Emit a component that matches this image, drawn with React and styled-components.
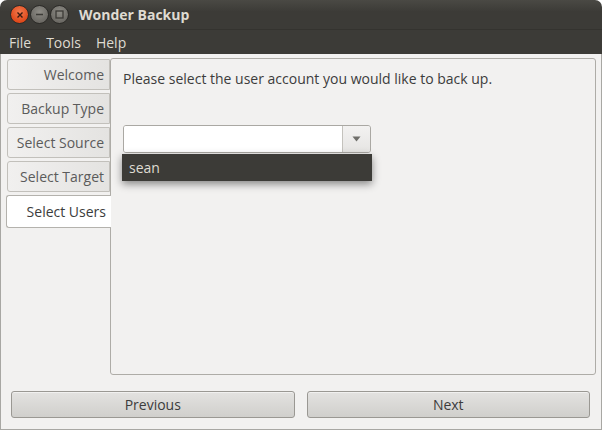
import React from 'react';
import styled, { createGlobalStyle } from 'styled-components';

const GlobalStyle = createGlobalStyle`
  html, body {
    margin: 0;
    padding: 0;
    background: #ffffff;
  }
  body {
    font-family: 'Open Sans', 'DejaVu Sans', sans-serif;
  }
`;

const tabs = ['Welcome', 'Backup Type', 'Select Source', 'Select Target', 'Select Users'];

const App = () => (
  <>
    <GlobalStyle />
    <Window>
      <TitleBar>
        <WinButtons>
          <WinButton close>
            <svg width="8" height="8" viewBox="0 0 8 8">
              <path d="M1.5 1.5 L6.5 6.5 M6.5 1.5 L1.5 6.5" stroke="#3a1a10" strokeWidth="1.4" />
            </svg>
          </WinButton>
          <WinButton>
            <svg width="9" height="9" viewBox="0 0 9 9">
              <path d="M1 4.5 H8" stroke="#3c3b37" strokeWidth="1.4" />
            </svg>
          </WinButton>
          <WinButton>
            <svg width="9" height="9" viewBox="0 0 9 9">
              <rect x="1" y="1" width="7" height="7" fill="none" stroke="#3c3b37" strokeWidth="1.3" />
            </svg>
          </WinButton>
        </WinButtons>
        <Title>Wonder Backup</Title>
      </TitleBar>
      <MenuBar>
        <MenuItem>File</MenuItem>
        <MenuItem>Tools</MenuItem>
        <MenuItem>Help</MenuItem>
      </MenuBar>
      <Body>
        <Notebook>
          <TabColumn>
            {tabs.map((t) => (
              <Tab key={t} active={t === 'Select Users'}>
                {t}
              </Tab>
            ))}
          </TabColumn>
          <Pane>
            <Prompt>Please select the user account you would like to back up.</Prompt>
            <ComboWrap>
              <Combo>
                <ComboEntry />
                <ComboArrow>
                  <svg width="9" height="6" viewBox="0 0 9 6">
                    <path d="M0.5 0.5 H8.5 L4.5 5.5 Z" fill="#6f6e6a" />
                  </svg>
                </ComboArrow>
              </Combo>
              <Popup>
                <PopupItem>sean</PopupItem>
              </Popup>
            </ComboWrap>
          </Pane>
        </Notebook>
        <ButtonRow>
          <Button>Previous</Button>
          <Button>Next</Button>
        </ButtonRow>
      </Body>
    </Window>
  </>
);

const Window = styled.div`
  width: 602px;
  height: 430px;
  display: flex;
  flex-direction: column;
  overflow: hidden;
  border-radius: 7px 7px 0 0;
`;

const TitleBar = styled.div`
  height: 29px;
  display: flex;
  align-items: center;
  background: linear-gradient(#4a4944, #3c3b37 40%);
  border-bottom: 1px solid #34332f;
  padding-left: 10px;
`;

const WinButtons = styled.div`
  display: flex;
  gap: 1px;
`;

const WinButton = styled.div`
  width: 17px;
  height: 17px;
  border-radius: 50%;
  display: flex;
  align-items: center;
  justify-content: center;
  background: ${(p) =>
    p.close
      ? 'radial-gradient(circle at 50% 35%, #f37a4e, #df4a1c 70%)'
      : 'radial-gradient(circle at 50% 35%, #8e8c86, #6c6a65 70%)'};
  border: 1px solid #2c2b28;
`;

const Title = styled.div`
  margin-left: 10px;
  color: #dfdbd2;
  font-weight: bold;
  font-size: 14px;
`;

const MenuBar = styled.div`
  height: 24px;
  display: flex;
  align-items: center;
  background: #3c3b37;
  padding-left: 2px;
`;

const MenuItem = styled.div`
  color: #dfdbd2;
  font-size: 14px;
  padding: 0 7px;
  margin-right: 1px;
`;

const Body = styled.div`
  flex: 1;
  display: flex;
  flex-direction: column;
  background: #f2f1f0;
  border: 1px solid #a8a7a3;
  border-top: none;
  padding: 4px 5px 0 6px;
`;

const Notebook = styled.div`
  display: flex;
  height: 317px;
`;

const TabColumn = styled.div`
  width: 103px;
  display: flex;
  flex-direction: column;
  gap: 3px;
  padding-top: 1px;
  position: relative;
  z-index: 1;
`;

const Tab = styled.div`
  height: ${(p) => (p.active ? '33px' : '31px')};
  margin-left: ${(p) => (p.active ? '-1px' : '0')};
  margin-right: ${(p) => (p.active ? '-1px' : '0')};
  box-sizing: border-box;
  display: flex;
  align-items: center;
  justify-content: flex-end;
  padding-right: ${(p) => (p.active ? '5px' : '5px')};
  font-size: 14px;
  color: ${(p) => (p.active ? '#3c3c3c' : '#5b5b5b')};
  background: ${(p) => (p.active ? '#ffffff' : 'linear-gradient(90deg, #f1f0ef, #e4e3e1)')};
  border: 1px solid ${(p) => (p.active ? '#b4b2ad' : '#c2c0bb')};
  border-right: ${(p) => (p.active ? 'none' : '1px solid #c2c0bb')};
  border-radius: 3px 0 0 3px;
`;

const Pane = styled.div`
  flex: 1;
  box-sizing: border-box;
  border: 1px solid #aeaca7;
  border-radius: 3px;
  background: #f2f1f0;
  padding: 10px 12px;
`;

const Prompt = styled.div`
  font-size: 14px;
  color: #3c3c3c;
`;

const ComboWrap = styled.div`
  position: relative;
  margin-top: 37px;
  width: 248px;
`;

const Combo = styled.div`
  display: flex;
  height: 28px;
  box-sizing: border-box;
  border: 1px solid #aaa8a3;
  border-radius: 3px;
  overflow: hidden;
`;

const ComboEntry = styled.div`
  flex: 1;
  background: #ffffff;
`;

const ComboArrow = styled.div`
  width: 27px;
  display: flex;
  align-items: center;
  justify-content: center;
  background: linear-gradient(#f3f2f1, #e6e5e3);
  border-left: 1px solid #c4c2bd;
`;

const Popup = styled.div`
  position: absolute;
  top: 29px;
  left: -1px;
  width: 250px;
  height: 27px;
  background: #3c3b37;
  box-shadow: 0 3px 8px rgba(0, 0, 0, 0.45);
  display: flex;
  align-items: center;
`;

const PopupItem = styled.div`
  color: #dfdbd2;
  font-size: 14px;
  padding-left: 7px;
`;

const ButtonRow = styled.div`
  display: flex;
  gap: 12px;
  margin-top: 16px;
  padding: 0 6px 0 4px;
`;

const Button = styled.div`
  flex: 1;
  height: 27px;
  box-sizing: border-box;
  display: flex;
  align-items: center;
  justify-content: center;
  font-size: 14px;
  color: #3c3c3c;
  background: linear-gradient(#e3e2e0, #d0cfcc);
  border: 1px solid #9a9893;
  border-radius: 3px;
  box-shadow: inset 0 1px 0 rgba(255, 255, 255, 0.5);
`;

export default App;
